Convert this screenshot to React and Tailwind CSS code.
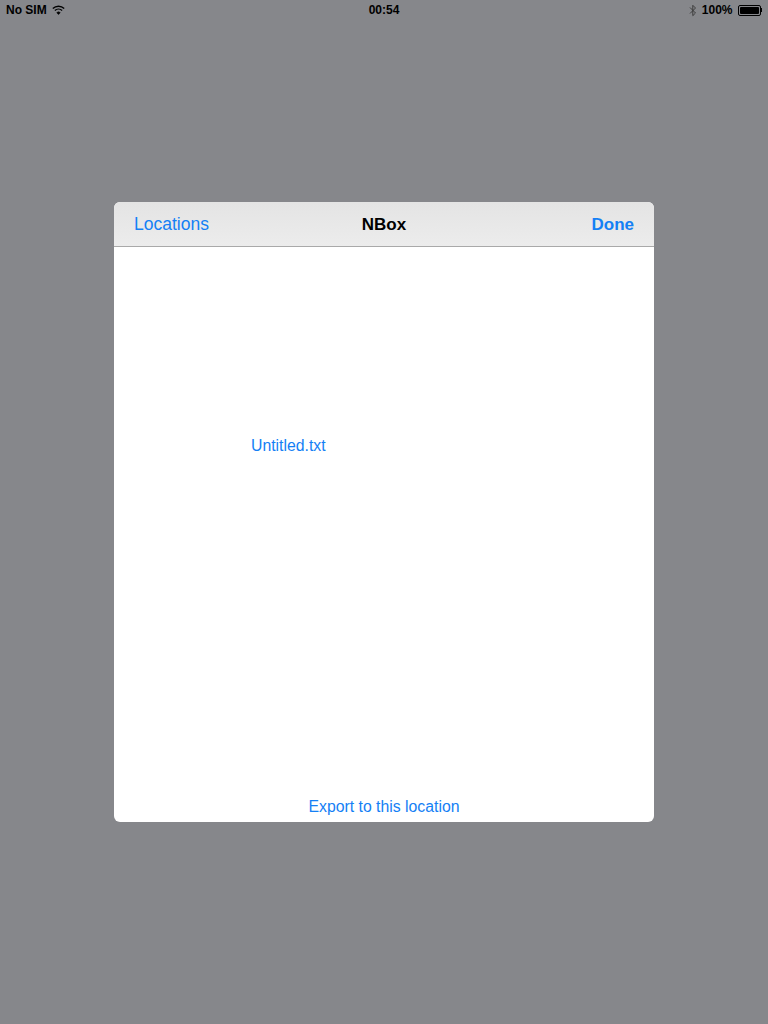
import React from 'react';

const font = { fontFamily: '"Liberation Sans", Arial, sans-serif' };

const Wifi = () => (
  <svg width="13" height="10" viewBox="0 0 13 10" className="ml-[5px]">
    <path d="M0.8 3.6 A8.2 8.2 0 0 1 12.2 3.6" fill="none" stroke="#000" strokeWidth="1.4" />
    <path d="M2.9 5.6 A5.2 5.2 0 0 1 10.1 5.6" fill="none" stroke="#000" strokeWidth="1.4" />
    <path d="M4.9 7.6 A2.4 2.4 0 0 1 8.1 7.6 L6.5 9.4 Z" fill="#000" stroke="#000" strokeWidth="0.8" />
  </svg>
);

const Bluetooth = () => (
  <svg width="8" height="13" viewBox="0 0 8 13">
    <path d="M1 3.5 L6.5 9 L3.8 11.7 V1.3 L6.5 4 L1 9.5" fill="none" stroke="#3d3d3d" strokeWidth="1" />
  </svg>
);

const Battery = () => (
  <div className="flex items-center">
    <div className="w-[23px] h-[11px] border border-black rounded-[2px] p-[1px]">
      <div className="w-full h-full bg-black rounded-[1px]" />
    </div>
    <div className="w-[1.5px] h-[4px] bg-black" />
  </div>
);

const StatusBar = () => (
  <div className="h-5 flex items-center justify-between px-[6px] text-[12px] font-bold text-black relative">
    <div className="flex items-center">
      <span>No SIM</span>
      <Wifi />
    </div>
    <span className="absolute left-1/2 -translate-x-1/2">00:54</span>
    <div className="flex items-center gap-[5px]">
      <Bluetooth />
      <span>100%</span>
      <Battery />
    </div>
  </div>
);

export default function App() {
  return (
    <div className="w-[768px] h-[1024px] bg-[#86878b] flex flex-col" style={font}>
      <StatusBar />
      <div className="flex-1 flex justify-center pt-[182px]">
        <div className="w-[540px] h-[620px] bg-white rounded-[6px] overflow-hidden flex flex-col">
          {/* Nav bar */}
          <div className="h-[45px] pt-[1px] bg-gradient-to-b from-[#e4e4e4] to-[#ececec] border-b border-[#a9a9a9] flex items-center justify-between px-[20px] relative">
            <span className="text-[17.5px] text-[#1480f5]">Locations</span>
            <span className="absolute left-1/2 -translate-x-1/2 text-[17px] font-bold text-black">NBox</span>
            <span className="text-[17px] font-bold text-[#1480f5]">Done</span>
          </div>
          {/* Content */}
          <div className="flex-1 flex flex-col">
            <div className="pl-[137px] pt-[187px]">
              <span className="text-[15.8px] text-[#1480f5]">Untitled.txt</span>
            </div>
            <div className="mt-auto pb-[3px] text-center">
              <span className="text-[15.8px] text-[#1480f5]">Export to this location</span>
            </div>
          </div>
        </div>
      </div>
    </div>
  );
}
